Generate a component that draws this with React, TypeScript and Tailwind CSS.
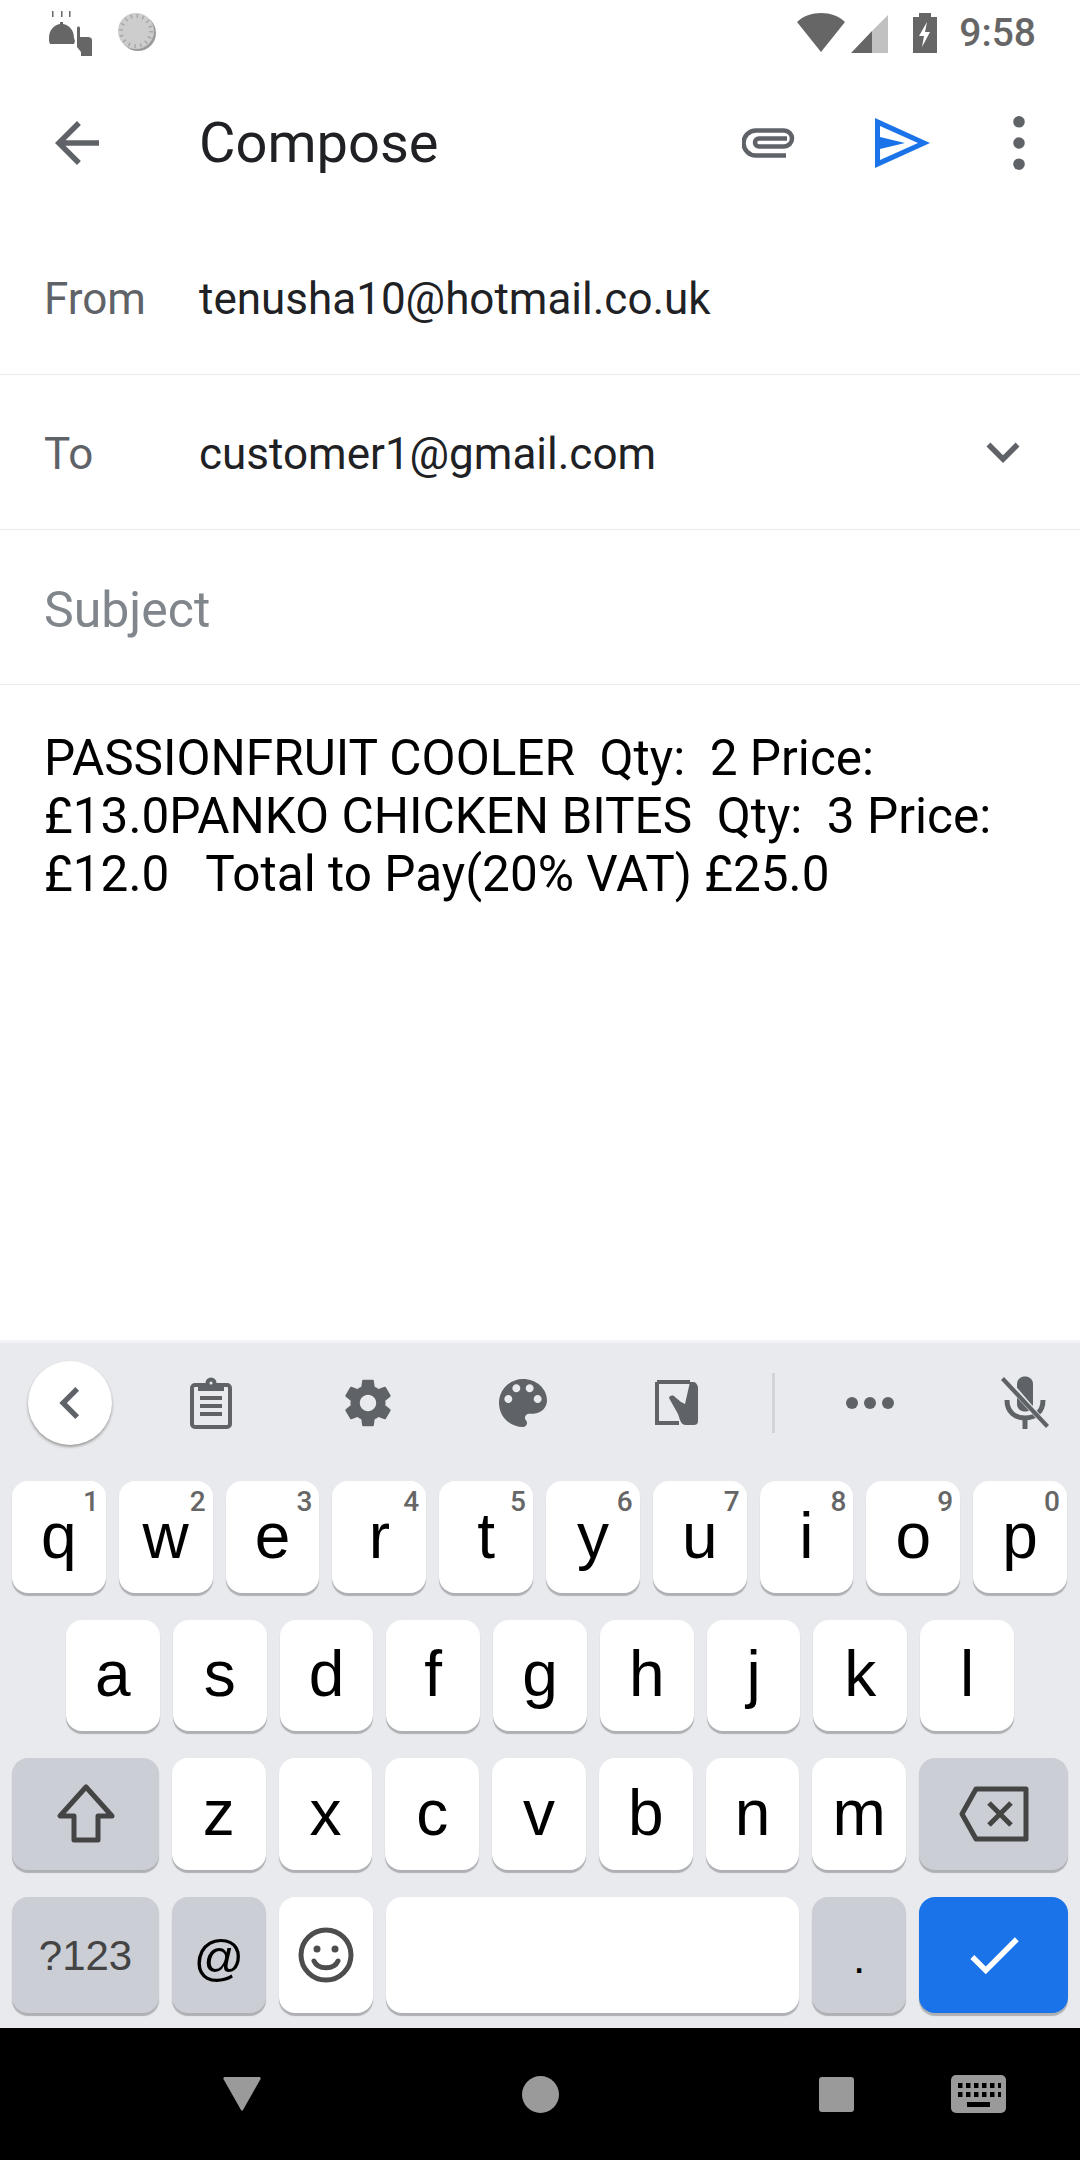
import type { ReactNode } from "react";

const ROW1 = [["q", "1"], ["w", "2"], ["e", "3"], ["r", "4"], ["t", "5"], ["y", "6"], ["u", "7"], ["i", "8"], ["o", "9"], ["p", "0"]];
const ROW2 = ["a", "s", "d", "f", "g", "h", "j", "k", "l"];
const ROW3 = ["z", "x", "c", "v", "b", "n", "m"];

function Key({ children, hint, className = "w-[94px] bg-white" }: { children?: ReactNode; hint?: string; className?: string }) {
  return (
    <div className={`relative flex items-center justify-center rounded-[16px] shadow-[0_3px_1px_#aeb0b4] text-[64px] text-black ${className}`}>
      {children}
      {hint && <span className="absolute right-[7px] top-[5px] font-['Roboto',sans-serif] text-[28px] font-medium leading-[32px] text-[#666]">{hint}</span>}
    </div>
  );
}

function Letter({ k, hint }: { k: string; hint?: string }) {
  return (
    <Key hint={hint} className="flex-1 bg-white">
      <span className="pb-[3px]">{k}</span>
    </Key>
  );
}

function Icon({ d, className = "", fill = "#5f6368" }: { d: string; className?: string; fill?: string }) {
  return (
    <svg viewBox="0 0 24 24" className={className} fill={fill}>
      <path d={d} />
    </svg>
  );
}

function Field({ label, value, muted, chevron }: { label?: string; value: string; muted?: boolean; chevron?: boolean }) {
  return (
    <div className="flex h-[155px] items-center border-b border-[#e8eaed] pl-[44px]">
      {label && <span className="w-[155px] pt-[3px] text-[44px] text-[#5f6368]">{label}</span>}
      <span className={muted ? "pt-[6px] text-[50px] text-[#80868b]" : "pt-[3px] text-[44px] text-[#202124]"}>{value}</span>
      {chevron && (
        <svg viewBox="0 0 24 24" className="ml-auto mr-[44px] h-[66px] w-[66px]" fill="#5f6368">
          <path d="M7.41 8.59 12 13.17l4.59-4.58L18 10l-6 6-6-6z" />
        </svg>
      )}
    </div>
  );
}

export default function App() {
  return (
    <div className="flex h-[2160px] w-[1080px] flex-col overflow-hidden bg-white font-['Roboto',sans-serif]">
      {/* status bar */}
      <div className="flex h-[66px] shrink-0 items-start pt-[10px]">
        <svg viewBox="0 0 50 48" className="ml-[48px] h-[48px] w-[50px]" fill="#666">
          <path d="M1 28c0-8 5-13 11-14v-2h3v2c6 1 11 6 11 14l1 3-1 3H2l-1-3z" />
          <path d="M4 1h1.500v6H4zM13 1h1.500v6H13zM21 1h1.500v6H21z" />
          <path d="M28 18c0-2 3-2 3 0v9h8c2 0 4 1 4 3v16H32v-4l-4-5z" transform="translate(1 0)" />
        </svg>
        <svg viewBox="0 0 40 40" className="ml-[19px] mt-[2px] h-[40px] w-[40px]">
          <circle cx="21" cy="21" r="18" fill="#9a9a9a" />
          <circle cx="19" cy="19" r="18" fill="#cdcdcd" />
          <circle cx="19" cy="19" r="15" fill="none" stroke="#a8a8a8" strokeWidth="4" strokeDasharray="1.5 4.4" />
        </svg>
        <div className="ml-auto flex items-start pr-[44px]">
          <svg viewBox="0 0 48 40" className="mt-[3px] h-[40px] w-[48px]" fill="#666">
            <path d="M0 9C6 3 15 0 24 0s18 3 24 9L24 39z" />
          </svg>
          <svg viewBox="0 0 38 38" className="ml-[6px] mt-[5px] h-[38px] w-[38px]">
            <path d="M37 0v38H21V16z" fill="#c1c1c1" />
            <path d="M21 16v22H0z" fill="#666" />
          </svg>
          <svg viewBox="0 0 24 40" className="ml-[24px] mt-[3px] h-[40px] w-[24px]">
            <path d="M6 0h12v4h6v36H0V4h6z" fill="#666" />
            <path d="M14 9 6 23h5l-2 11 8-15h-5z" fill="#fff" />
          </svg>
          <span className="ml-[22px] text-[39px] font-medium leading-[46px] text-[#666]">9:58</span>
        </div>
      </div>

      {/* toolbar */}
      <div className="flex h-[154px] shrink-0 items-center">
        <Icon className="ml-[44px] h-[66px] w-[66px]" d="M20 11H7.83l5.59-5.59L12 4l-8 8 8 8 1.41-1.41L7.83 13H20v-2z" />
        <span className="ml-[89px] text-[56px] text-[#202124]">Compose</span>
        <svg viewBox="0 0 56 30" className="ml-auto h-[30px] w-[56px]" fill="none" stroke="#5f6368" strokeWidth="4.500">
          <path d="M44 27.500H14a12.500 12.500 0 0 1 0-25h28a8 8 0 0 1 0 16H17a4 4 0 0 1 0-8h28" />
        </svg>
        <svg viewBox="0 0 56 50" className="ml-[76px] h-[50px] w-[56px]" fill="#1a73e8">
          <path d="M1 0 56 25 1 50zM6 8v11l25 6-25 6v11l38-17z" fillRule="evenodd" />
        </svg>
        <svg viewBox="0 0 24 24" className="ml-[56px] mr-[28px] h-[66px] w-[66px]" fill="#5f6368">
          <circle cx="12" cy="4.3" r="2.1" />
          <circle cx="12" cy="12" r="2.1" />
          <circle cx="12" cy="19.7" r="2.1" />
        </svg>
      </div>

      <Field label="From" value="tenusha10@hotmail.co.uk" />
      <Field label="To" value="customer1@gmail.com" chevron />
      <Field value="Subject" muted />

      {/* body */}
      <div className="min-h-0 flex-1 px-[44px] pt-[44px] text-[49.5px] leading-[58px] text-black">
        <p className="whitespace-pre-wrap">{"PASSIONFRUIT COOLER  Qty:  2 Price:\n£13.0PANKO CHICKEN BITES  Qty:  3 Price:\n£12.0   Total to Pay(20% VAT) £25.0"}</p>
      </div>

      {/* keyboard */}
      <div className="h-[688px] shrink-0 border-t-[3px] border-[#f1f3f4] bg-[#e8eaed] font-['Liberation_Sans',sans-serif]">
        <div className="flex h-[138px] items-center pb-[18px]">
          <div className="ml-[28px] flex h-[84px] w-[84px] items-center justify-center rounded-full bg-white shadow-[0_2px_3px_#9a9a9a]">
            <Icon className="h-[64px] w-[64px]" d="M15.41 7.41 14 6l-6 6 6 6 1.41-1.41L10.83 12z" />
          </div>
          <svg viewBox="0 0 42 52" className="ml-[78px] h-[52px] w-[42px]" fill="none" stroke="#5f6368" strokeWidth="4">
            <rect x="2" y="8" width="38" height="42" rx="3" />
            <path d="M10 8h22v4H10z" fill="#5f6368" />
            <circle cx="21" cy="6" r="3.500" fill="#e8eaed" />
            <path d="M10 21h22M10 29h22M10 37h22" />
          </svg>
          <Icon className="ml-[108px] h-[56px] w-[56px]" d="M19.43 12.98c.04-.32.07-.64.07-.98s-.03-.66-.07-.98l2.11-1.65c.19-.15.24-.42.12-.64l-2-3.46c-.12-.22-.39-.3-.61-.22l-2.49 1c-.52-.4-1.08-.73-1.69-.98l-.38-2.65C14.46 2.18 14.25 2 14 2h-4c-.25 0-.46.18-.49.42l-.38 2.65c-.61.25-1.17.59-1.69.98l-2.49-1c-.23-.09-.49 0-.61.22l-2 3.46c-.13.22-.07.49.12.64l2.11 1.65c-.04.32-.07.65-.07.98s.03.66.07.98l-2.11 1.65c-.19.15-.24.42-.12.64l2 3.46c.12.22.39.3.61.22l2.49-1c.52.4 1.08.73 1.69.98l.38 2.65c.03.24.24.42.49.42h4c.25 0 .46-.18.49-.42l.38-2.65c.61-.25 1.17-.59 1.69-.98l2.49 1c.23.09.49 0 .61-.22l2-3.46c.12-.22.07-.49-.12-.64l-2.11-1.65zM12 15.500c-1.93 0-3.5-1.57-3.5-3.5s1.57-3.5 3.5-3.5 3.5 1.57 3.5 3.5-1.57 3.5-3.5 3.5z" />
          <Icon className="ml-[95px] h-[64px] w-[64px]" d="M12 3c-4.97 0-9 4.03-9 9s4.03 9 9 9c.83 0 1.5-.67 1.5-1.5 0-.39-.15-.74-.39-1.01-.23-.26-.38-.61-.38-.99 0-.83.67-1.5 1.5-1.5H16c2.76 0 5-2.24 5-5 0-4.42-4.03-8-9-8zm-5.5 9c-.83 0-1.5-.67-1.5-1.5S5.67 9 6.5 9 8 9.67 8 10.5 7.33 12 6.5 12zm3-4C8.67 8 8 7.33 8 6.5S8.67 5 9.5 5s1.5.67 1.5 1.5S10.33 8 9.5 8zm5 0c-.83 0-1.5-.67-1.5-1.5S13.67 5 14.5 5s1.5.67 1.5 1.5S15.33 8 14.5 8zm3 4c-.83 0-1.5-.67-1.5-1.5S16.67 9 17.5 9s1.5.67 1.5 1.5-.67 1.5-1.5 1.5z" />
          <svg viewBox="0 0 46 46" className="ml-[99px] h-[46px] w-[46px]">
            <path d="M3 2h33M3 2v41h22" fill="none" stroke="#5f6368" strokeWidth="4" />
            <path d="M15 18c1-3 4-3 6-1l6 5 4 2 5-22h3c3 0 4 2 5 5v34c0 3-2 4-4 4H32c-3 0-5-2-6-5l-2-6z" fill="#5f6368" />
          </svg>
          <div className="ml-[72px] h-[60px] w-[3px] bg-[#d3d4d8]" />
          <svg viewBox="0 0 48 12" className="ml-[71px] h-[12px] w-[48px]" fill="#5f6368">
            <circle cx="6" cy="6" r="6" />
            <circle cx="24" cy="6" r="6" />
            <circle cx="42" cy="6" r="6" />
          </svg>
          <svg viewBox="0 0 50 54" className="ml-[106px] h-[54px] w-[50px]">
            <path d="M17 8c0-10 16-10 16 0v20c0 10-16 10-16 0z" fill="#5f6368" />
            <path d="M7 24c0 12 8 18 18 18s18-6 18-18M25 42v11" fill="none" stroke="#5f6368" strokeWidth="5" />
            <path d="M0 3l7-3 43 50-4 3z" fill="#e8eaed" />
            <path d="M1 4l3-3 45 48-3 3z" fill="#5f6368" />
          </svg>
        </div>

        <div className="flex h-[112px] gap-[13px] pl-[12px] pr-[13px]">
          {ROW1.map(([k, n]) => (
            <Letter key={k} k={k} hint={n} />
          ))}
        </div>
        <div className="mt-[27px] flex h-[111px] gap-[13px] px-[66px]">
          {ROW2.map((k) => (
            <Letter key={k} k={k} />
          ))}
        </div>
        <div className="mt-[27px] flex h-[112px] gap-[13px] pl-[12px] pr-[12px]">
          <Key className="w-[147px] bg-[#cbced4]">
            <svg viewBox="0 0 62 62" className="h-[62px] w-[62px]" fill="none" stroke="#444" strokeWidth="5" strokeLinejoin="round">
              <path d="M31 4 5 33h14v24h24V33h14z" />
            </svg>
          </Key>
          {ROW3.map((k) => (
            <Letter key={k} k={k} />
          ))}
          <Key className="w-[149px] bg-[#cbced4]">
            <svg viewBox="0 0 70 56" className="h-[56px] w-[70px]" fill="none" stroke="#444" strokeWidth="5" strokeLinejoin="round">
              <path d="M17 3h50v50H17L3 28z" />
              <path d="m30 17 22 22M52 17 30 39" />
            </svg>
          </Key>
        </div>
        <div className="mt-[27px] flex h-[116px] gap-[13px] pl-[12px] pr-[12px]">
          <Key className="w-[147px] bg-[#cbced4]"><span className="text-[42px] text-[#444]">?123</span></Key>
          <Key className="w-[94px] bg-[#cbced4]"><span className="pt-[6px] text-[50px]">@</span></Key>
          <Key className="w-[94px] bg-white">
            <svg viewBox="0 0 56 56" className="h-[56px] w-[56px]" fill="none" stroke="#4d4d4d" strokeWidth="5">
              <circle cx="28" cy="28" r="25" />
              <circle cx="19" cy="22" r="3.5" fill="#4d4d4d" stroke="none" />
              <circle cx="37" cy="22" r="3.5" fill="#4d4d4d" stroke="none" />
              <path d="M16 34c4 9 20 9 24 0" strokeLinecap="round" />
            </svg>
          </Key>
          <Key className="flex-1 bg-white" />
          <Key className="w-[94px] bg-[#cbced4]"><span className="pt-[6px] text-[44px] leading-[80px]">.</span></Key>
          <Key className="w-[149px] bg-[#1a73e8]">
            <Icon className="h-[66px] w-[66px]" fill="#fff" d="M9 16.17 4.83 12l-1.42 1.41L9 19 21 7l-1.41-1.41z" />
          </Key>
        </div>
      </div>

      {/* nav bar */}
      <div className="flex h-[132px] shrink-0 items-center bg-black">
        <svg viewBox="0 0 38 34" className="ml-[223px] h-[34px] w-[38px]" fill="#9a9a9a">
          <path d="M2 0h34c2 0 2 2 1 3L20 33c-.5 1-1.500 1-2 0L1 3C0 2 0 0 2 0z" />
        </svg>
        <div className="ml-[261px] h-[37px] w-[37px] rounded-full bg-[#9a9a9a]" />
        <div className="ml-[260px] h-[35px] w-[35px] rounded-[3px] bg-[#9a9a9a]" />
        <svg viewBox="0 0 55 38" className="ml-[97px] h-[38px] w-[55px]">
          <rect width="55" height="38" rx="5" fill="#9a9a9a" />
          <path d="M7 8h4.500v5H7zM15 8h4.500v5H15zM23 8h4.500v5H23zM31 8h4.500v5H31zM39 8h4.500v5H39zM47 8h3v5h-3zM7 17h4.500v5H7zM15 17h4.500v5H15zM23 17h4.500v5H23zM31 17h4.500v5H31zM39 17h4.500v5H39zM47 17h3v5h-3zM16 27h23v5H16z" fill="#000" />
        </svg>
      </div>
    </div>
  );
}
